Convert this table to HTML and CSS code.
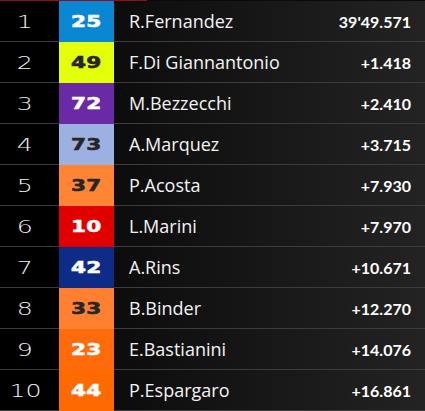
FILE: index.html
```html
<!DOCTYPE html>
<html>
<head>
<meta charset="utf-8">
<link rel="stylesheet" href="styles.css">
</head>
<body>
<div class="board">
  <div class="progress"></div>
  <div class="row"><div class="pos"><span>1</span></div><div class="num c25"><span>25</span></div><div class="info"><span class="name">R.Fernandez</span><span class="time">39'49.571</span></div></div>
  <div class="row"><div class="pos"><span>2</span></div><div class="num c49 dark"><span>49</span></div><div class="info"><span class="name">F.Di Giannantonio</span><span class="time">+1.418</span></div></div>
  <div class="row"><div class="pos"><span>3</span></div><div class="num c72"><span>72</span></div><div class="info"><span class="name">M.Bezzecchi</span><span class="time">+2.410</span></div></div>
  <div class="row"><div class="pos"><span>4</span></div><div class="num c73 dark"><span>73</span></div><div class="info"><span class="name">A.Marquez</span><span class="time">+3.715</span></div></div>
  <div class="row"><div class="pos"><span>5</span></div><div class="num c37 dark"><span>37</span></div><div class="info"><span class="name">P.Acosta</span><span class="time">+7.930</span></div></div>
  <div class="row"><div class="pos"><span>6</span></div><div class="num c10"><span>10</span></div><div class="info"><span class="name">L.Marini</span><span class="time">+7.970</span></div></div>
  <div class="row"><div class="pos"><span>7</span></div><div class="num c42"><span>42</span></div><div class="info"><span class="name">A.Rins</span><span class="time">+10.671</span></div></div>
  <div class="row"><div class="pos"><span>8</span></div><div class="num c33 dark"><span>33</span></div><div class="info"><span class="name">B.Binder</span><span class="time">+12.270</span></div></div>
  <div class="row"><div class="pos"><span>9</span></div><div class="num c23"><span>23</span></div><div class="info"><span class="name">E.Bastianini</span><span class="time">+14.076</span></div></div>
  <div class="row"><div class="pos"><span>10</span></div><div class="num c44"><span>44</span></div><div class="info"><span class="name">P.Espargaro</span><span class="time">+16.861</span></div></div>
</div>
</body>
</html>
```

FILE: styles.css
```css
html, body {
  margin: 0;
  padding: 0;
  background: #0a0a0a;
}
.board {
  width: 425px;
  display: flex;
  flex-direction: column;
}
.progress {
  width: 147px;
  height: 1px;
  background: #8e1018;
}
.row {
  display: grid;
  grid-template-columns: 59px 55px 1fr;
  height: 41px;
}
.pos {
  background: #000;
  border-bottom: 1px solid #3c3c3c;
  color: #f2f2f2;
  font-family: "DejaVu Sans", sans-serif;
  font-weight: 200;
  font-size: 18px;
  display: flex;
  align-items: center;
  justify-content: center;
  padding-right: 9px;
}
.pos span {
  display: inline-block;
  transform: scaleX(1.4);
}
.num {
  display: flex;
  align-items: center;
  justify-content: center;
  font-family: "DejaVu Sans", sans-serif;
  font-weight: bold;
  font-size: 16px;
  color: #fff;
}
.num span {
  display: inline-block;
  transform: scaleX(1.35);
  -webkit-text-stroke: 0.6px currentColor;
}
.num.dark { color: #262626; }
.c25 { background: #0a87d3; }
.c49 { background: #e4ff0a; }
.c72 { background: #6a2aa5; }
.c73 { background: #9db0e2; }
.c37 { background: #ff8535; }
.c10 { background: #e10000; }
.c42 { background: #0f2b88; }
.c33 { background: #ff8030; }
.c23 { background: #ff6b0a; }
.c44 { background: #ff6a00; }
.info {
  display: flex;
  align-items: center;
  justify-content: space-between;
  padding: 0 14px 0 15px;
  background: linear-gradient(90deg, #0c0c0c, #232323);
  border-bottom: 1px solid #3c3c3c;
  color: #f4f4f4;
}
.name {
  font-family: "Open Sans", sans-serif;
  font-size: 18px;
}
.time {
  font-family: Lato, sans-serif;
  font-size: 16px;
  font-weight: bold;
  color: #fff;
}
```
